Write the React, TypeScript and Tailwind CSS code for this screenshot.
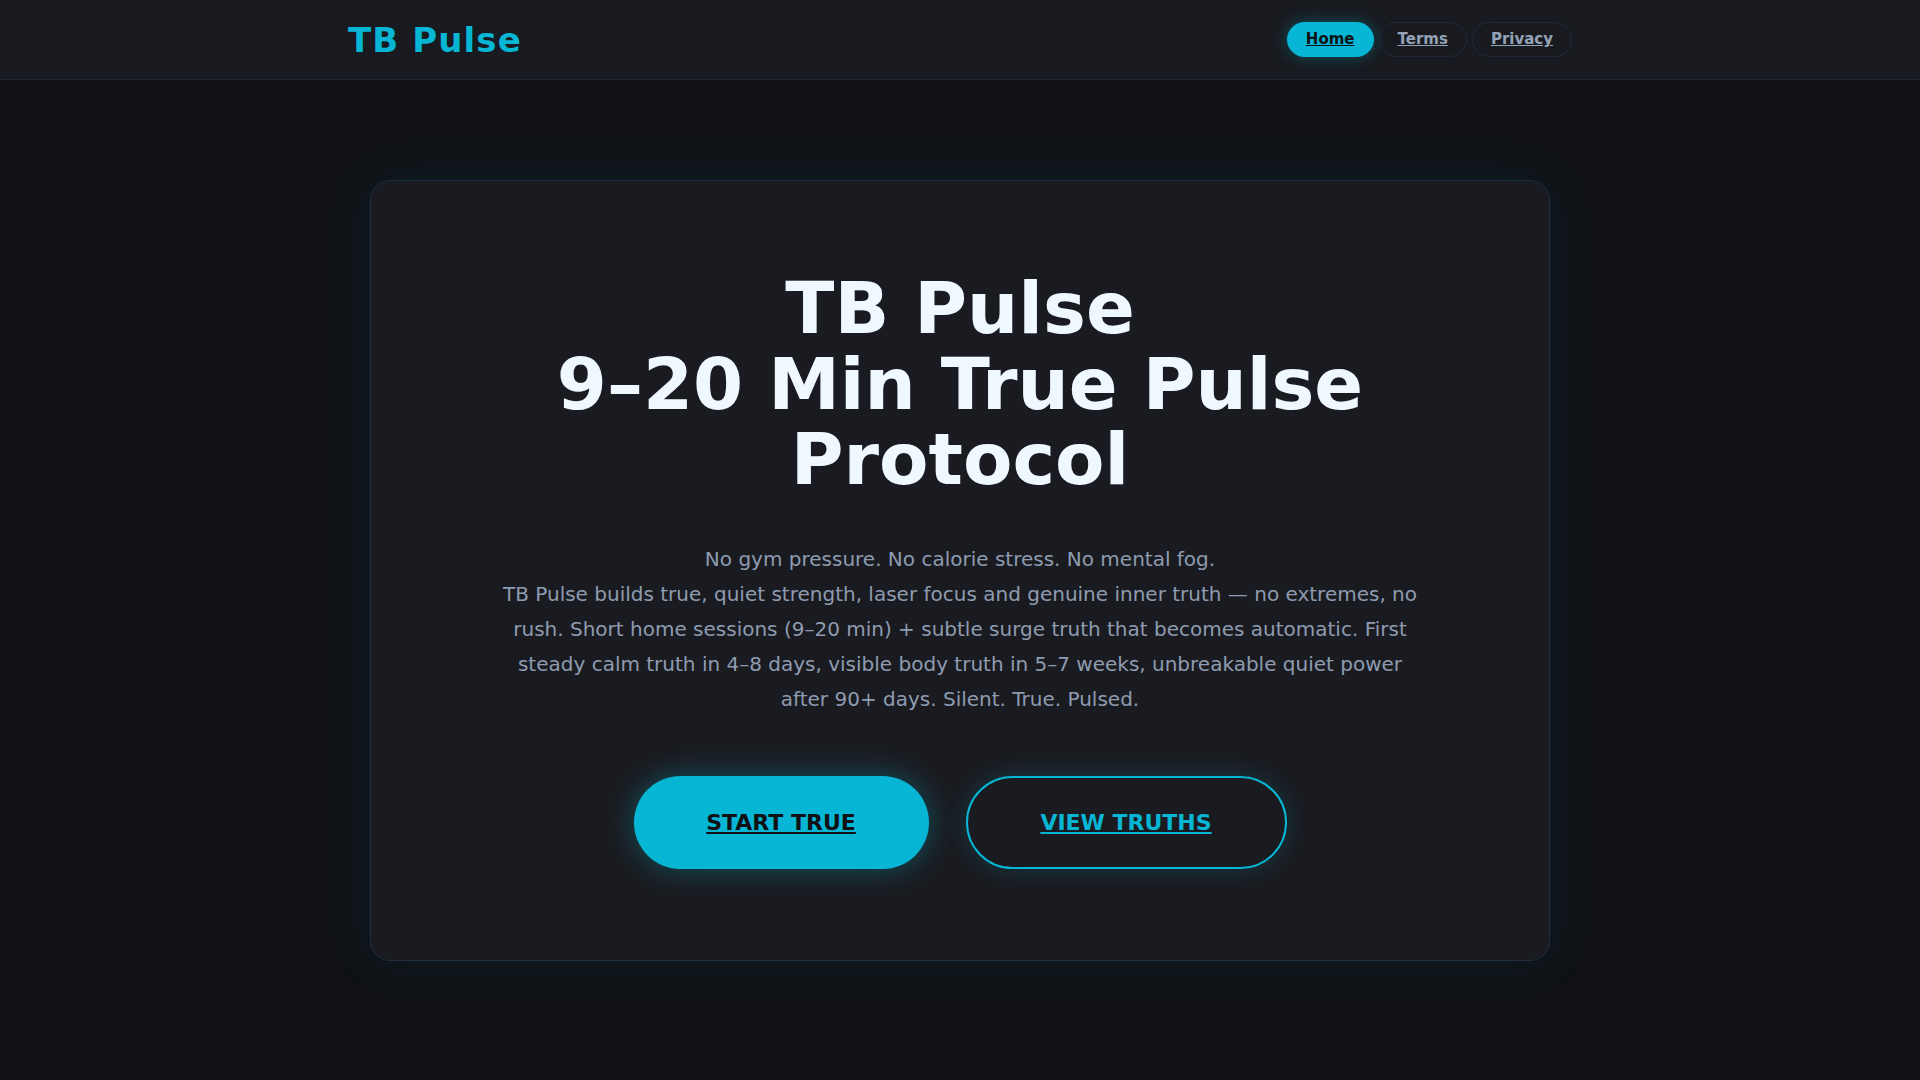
import React from "react";

export default function App() {
  return (
    <div
      className="min-h-screen w-full bg-[#0f1115] text-white"
      style={{ fontFamily: '"DejaVu Sans", "Liberation Sans", sans-serif' }}
    >
      <header className="h-[80px] bg-[#181a1f] border-b border-[#1f2633]">
        <div className="mx-auto flex h-full w-[1224px] items-center justify-between">
          <div className="text-[34px] font-bold tracking-[1.1px] text-[#06b6d4] leading-none">
            TB Pulse
          </div>
          <nav className="flex items-center gap-[5px]">
            <a className="rounded-full border border-[#06b6d4] bg-[#06b6d4] px-[18px] py-[5px] text-[15px] leading-[1.5] font-bold text-[#0f1115] underline shadow-[0_0_16px_rgba(6,182,212,0.35)]">
              Home
            </a>
            <a className="rounded-full border border-[#1e2a3a] px-[18px] py-[5px] text-[15px] leading-[1.5] font-bold text-[#94a3b8] underline">
              Terms
            </a>
            <a className="rounded-full border border-[#1e2a3a] px-[18px] py-[5px] text-[15px] leading-[1.5] font-bold text-[#94a3b8] underline">
              Privacy
            </a>
          </nav>
        </div>
      </header>

      <main className="pt-[100px] pb-[120px]">
        <section className="mx-auto flex w-[1180px] flex-col items-center rounded-[20px] border border-[#1c2e40] bg-[#1a1b20] pt-[90px] pb-[91px] shadow-[0_0_50px_rgba(6,182,212,0.09)]">
          <h1 className="mb-[44px] text-center text-[72px] font-bold leading-[1.05] text-[#f0f8ff]">
            TB Pulse
            <br />
            9–20 Min True Pulse
            <br />
            Protocol
          </h1>
          <p className="mb-[59px] max-w-[920px] text-center text-[20px] leading-[1.75] text-[#8e9bb0]">
            No gym pressure. No calorie stress. No mental fog.
            <br />
            TB Pulse builds true, quiet strength, laser focus and genuine inner truth — no extremes, no rush. Short home sessions (9–20 min) + subtle surge truth that becomes automatic. First steady calm truth in 4–8 days, visible body truth in 5–7 weeks, unbreakable quiet power after 90+ days. Silent. True. Pulsed.
          </p>
          <div className="flex items-center gap-[37px]">
            <a className="flex h-[93px] w-[295px] items-center justify-center rounded-full bg-[#06b6d4] text-[22px] font-bold text-[#0f1115] underline shadow-[0_0_30px_rgba(6,182,212,0.35)]">
              START TRUE
            </a>
            <a className="flex h-[93px] w-[321px] items-center justify-center rounded-full border-2 border-[#06b6d4] text-[22px] font-bold text-[#06b6d4] underline shadow-[0_0_24px_rgba(6,182,212,0.2)]">
              VIEW TRUTHS
            </a>
          </div>
        </section>
      </main>
    </div>
  );
}
